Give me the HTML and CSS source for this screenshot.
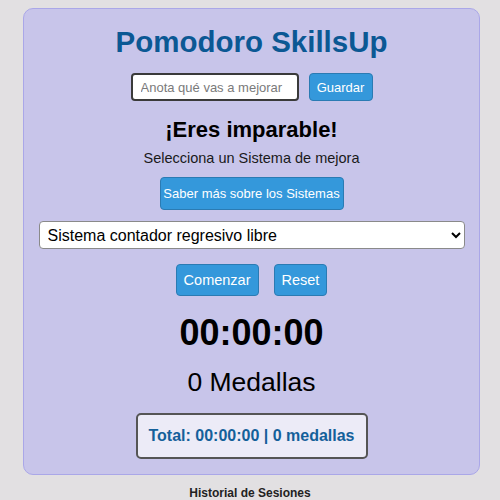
FILE: index.html
```html
<!DOCTYPE html>
<html lang="es">
<head>
<meta charset="utf-8">
<title>Pomodoro SkillsUp</title>
<link rel="stylesheet" href="styles.css">
</head>
<body>
<main class="card">
  <h1 class="title">Pomodoro SkillsUp</h1>
  <div class="note-row">
    <input class="note-input" type="text" placeholder="Anota qué vas a mejorar">
    <button class="btn btn-sm">Guardar</button>
  </div>
  <h2 class="cheer">¡Eres imparable!</h2>
  <p class="subtitle">Selecciona un Sistema de mejora</p>
  <button class="btn btn-info">Saber más sobre los Sistemas</button>
  <select class="system-select">
    <option>Sistema contador regresivo libre</option>
  </select>
  <div class="controls">
    <button class="btn btn-lg">Comenzar</button>
    <button class="btn btn-lg">Reset</button>
  </div>
  <div class="timer">00:00:00</div>
  <div class="medals">0 Medallas</div>
  <div class="total">Total: 00:00:00 | 0 medallas</div>
</main>
<h3 class="history">Historial de Sesiones</h3>
</body>
</html>
```
FILE: styles.css
```css
html, body {
  margin: 0;
  padding: 0;
}
body {
  background: #e2e0e2;
  font-family: "Liberation Sans", Arial, sans-serif;
  padding: 8px 0 0;
}
.card {
  width: 457px;
  margin: 0 0 0 23px;
  box-sizing: border-box;
  background: #c8c5ea;
  border: 1px solid #aaa7e8;
  border-radius: 10px;
  padding: 15px 14px 15px;
  display: flex;
  flex-direction: column;
  align-items: center;
}
.title {
  margin: 0;
  font-size: 29.5px;
  font-weight: bold;
  color: #0b5894;
  line-height: 36px;
}
.note-row {
  display: flex;
  gap: 10px;
  margin-top: 13px;
}
.note-input {
  width: 168px;
  height: 28px;
  box-sizing: border-box;
  border: 2px solid #3a3a3a;
  border-radius: 4px;
  padding: 0 8px;
  font-family: "Liberation Sans", Arial, sans-serif;
  font-size: 13px;
  background: #fff;
}
.note-input::placeholder {
  color: #7a7a7a;
}
.btn {
  background: #3498db;
  color: #fff;
  border: 1px solid #2b7bb3;
  border-radius: 4px;
  font-family: "Liberation Sans", Arial, sans-serif;
  cursor: pointer;
}
.btn-sm {
  width: 64px;
  height: 28px;
  padding: 0;
  font-size: 13px;
}
.cheer {
  margin: 16px 0 0;
  font-size: 22px;
  font-weight: bold;
  color: #000;
  line-height: 26px;
}
.subtitle {
  margin: 6px 0 0;
  font-size: 14.5px;
  color: #1a1a1a;
  line-height: 18px;
}
.btn-info {
  margin-top: 10px;
  width: 184px;
  height: 33px;
  padding: 0;
  font-size: 13px;
}
.system-select {
  margin-top: 11px;
  width: 426px;
  height: 28px;
  border: 1px solid #8a8a8a;
  border-radius: 4px;
  background: #fff;
  font-family: "Liberation Sans", Arial, sans-serif;
  font-size: 16px;
  color: #000;
  padding: 0 4px;
}
.controls {
  display: flex;
  gap: 15px;
  margin-top: 15px;
}
.btn-lg {
  height: 32px;
  padding: 0 7px;
  font-size: 14.5px;
}
.timer {
  margin-top: 16px;
  font-size: 36px;
  font-weight: bold;
  color: #000;
  line-height: 42px;
}
.medals {
  margin-top: 13px;
  font-size: 26.5px;
  color: #000;
  line-height: 30px;
}
.total {
  margin-top: 16px;
  width: 232px;
  height: 46px;
  box-sizing: border-box;
  background: #ecebf7;
  border: 2px solid #555;
  border-radius: 5px;
  display: flex;
  align-items: center;
  justify-content: center;
  font-size: 16px;
  font-weight: bold;
  color: #14609a;
}
.history {
  margin: 11px 0 0;
  text-align: center;
  font-size: 12px;
  font-weight: bold;
  color: #222;
}
```
